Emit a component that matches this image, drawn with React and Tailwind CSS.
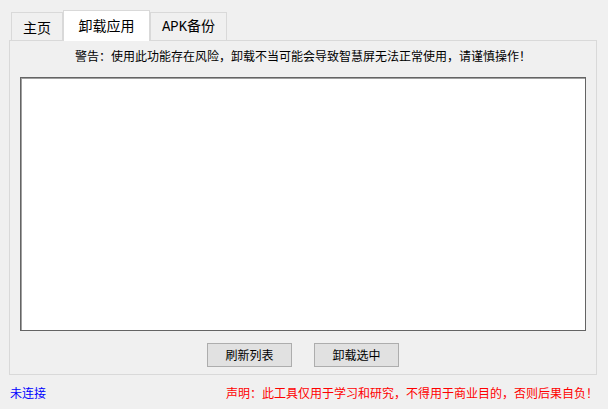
import React from 'react';

const cjk = { fontFamily: '"Noto Sans CJK SC", "Microsoft YaHei", sans-serif' };

const Tab = ({ label, active, width, mono }) => (
  <div
    className={
      active
        ? 'relative z-10 -mb-px flex h-[31px] items-center justify-center border border-b-0 border-[#d9d9d9] bg-white pb-[1px] text-[14px] text-black'
        : 'flex h-[28px] items-center justify-center border border-b-0 border-[#d9d9d9] bg-[#f0f0f0] pt-[1px] text-[14px] text-black'
    }
    style={{
      width,
      fontFamily: mono
        ? '"Liberation Mono", "Noto Sans CJK SC", monospace'
        : '"Noto Sans CJK SC", sans-serif',
    }}
  >
    {label}
  </div>
);

export default function App() {
  return (
    <div className="h-[409px] w-[608px] overflow-hidden bg-[#f0f0f0] text-black" style={cjk}>
      {/* tabs */}
      <div className="flex h-[40px] items-end pl-[11px]">
        <Tab label="主页" width={52} />
        <Tab label="卸载应用" width={87} active />
        <Tab label="APK备份" width={77} mono />
      </div>

      {/* tab page */}
      <div className="ml-[9px] flex h-[335px] w-[588px] flex-col border border-[#d9d9d9] bg-[#f0f0f0]">
        <div className="pt-[7px] text-center text-[12px] leading-[16px]">
          警告：使用此功能存在风险，卸载不当可能会导致智慧屏无法正常使用，请谨慎操作！
        </div>
        <div className="mx-[10px] mt-[13px] h-[254px] border border-[#646464] bg-white shadow-[inset_1px_1px_0_#a0a0a0]" />
        <div className="mt-[12px] flex justify-center gap-[22px]">
          <button className="h-[24px] w-[85px] border border-[#adadad] bg-[#e1e1e1] text-[12px] leading-[16px]">
            刷新列表
          </button>
          <button className="h-[24px] w-[85px] border border-[#adadad] bg-[#e1e1e1] text-[12px] leading-[16px]">
            卸载选中
          </button>
        </div>
      </div>

      {/* status */}
      <div className="mt-[10px] flex justify-between px-[10px] text-[12px] leading-[16px]">
        <span className="text-[#0000ff]">未连接</span>
        <span className="text-[#ff0000]">声明：此工具仅用于学习和研究，不得用于商业目的，否则后果自负！</span>
      </div>
    </div>
  );
}
